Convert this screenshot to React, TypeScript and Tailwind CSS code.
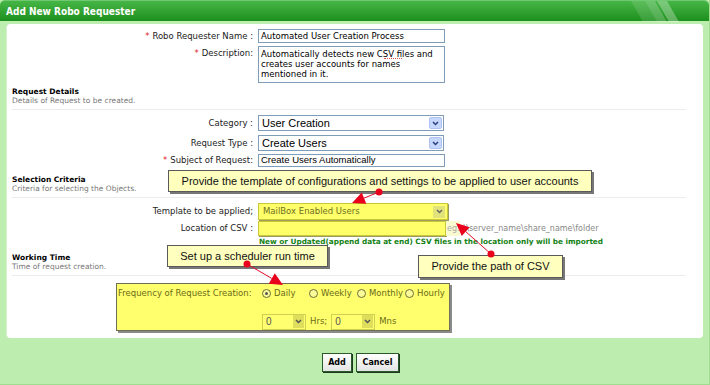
import React from "react";

const verdana = "font-['DejaVu_Sans',Verdana,sans-serif]";
const arial = "font-['Liberation_Sans',Arial,sans-serif]";

function Star() {
  return <span className="text-[#e0242b] mr-[3px]">*</span>;
}

function Chevron({ color = "#2b3f80" }: { color?: string }) {
  return (
    <svg width="7" height="5" viewBox="0 0 7 5">
      <path d="M1 1 L3.5 3.5 L6 1" stroke={color} strokeWidth="1.5" fill="none" />
    </svg>
  );
}

function Select({ value }: { value: string }) {
  return (
    <div className="w-[186px] h-[16px] border border-[#7f9db9] bg-white flex items-center">
      <span className={`${arial} text-[11px] text-black pl-[3px] flex-1 leading-none`}>{value}</span>
      <div className="w-[13px] h-[12px] mr-[1px] bg-[#c7d6fb] border border-[#aec3f3] rounded-[2px] flex items-center justify-center">
        <Chevron />
      </div>
    </div>
  );
}

function Section({ title, sub }: { title: string; sub: string }) {
  return (
    <div className="px-[5px]">
      <div className={`${verdana} text-[7.5px] font-bold leading-[9px] text-black`}>{title}</div>
      <div className={`${verdana} text-[7.5px] leading-[9px] text-[#777]`}>{sub}</div>
      <div className="h-px bg-[#ececec] mt-[4px] mr-[12px]" />
    </div>
  );
}

function Label({ children, top = false }: { children: React.ReactNode; top?: boolean }) {
  return (
    <div
      className={`w-[246px] mr-[5px] text-right ${verdana} text-[8.5px] text-[#222] leading-none ${top ? "pt-[3px]" : "self-center"}`}
    >
      {children}
    </div>
  );
}

function Callout({ className, text }: { className: string; text: string }) {
  return (
    <div
      className={`absolute bg-[#ffffbe] border border-[#5a5a5a] shadow-[2px_2px_0_#777] flex items-center justify-center ${arial} text-[11px] text-[#111] ${className}`}
    >
      {text}
    </div>
  );
}

function Radio({ label, checked = false, w }: { label: string; checked?: boolean; w: string }) {
  return (
    <div className={`flex items-center gap-[3px] ${w}`}>
      <div className="w-[9px] h-[9px] rounded-full border border-[#6d6d3a] bg-[#fbfb9a] flex items-center justify-center">
        {checked && <div className="w-[3px] h-[3px] rounded-full bg-[#555]" />}
      </div>
      <span>{label}</span>
    </div>
  );
}

function SmallSelect() {
  return (
    <div className="w-[44px] h-[16px] border border-[#cfcf50] bg-[#ffff70] flex items-center">
      <span className={`${arial} text-[10px] pl-[3px] flex-1 text-[#555]`}>0</span>
      <div className="w-[11px] h-[13px] mr-[1px] bg-[#dede5c] flex items-center justify-center">
        <Chevron color="#555" />
      </div>
    </div>
  );
}

function Arrow({ x1, y1, x2, y2 }: { x1: number; y1: number; x2: number; y2: number }) {
  const dx = x2 - x1;
  const dy = y2 - y1;
  const len = Math.sqrt(dx * dx + dy * dy);
  const ux = dx / len;
  const uy = dy / len;
  const hl = 13;
  const hw = 6;
  const bx = x2 - ux * hl;
  const by = y2 - uy * hl;
  const p = `${x2},${y2} ${bx - uy * hw},${by + ux * hw} ${bx + uy * hw},${by - ux * hw}`;
  return (
    <g>
      <line x1={x1} y1={y1} x2={bx} y2={by} stroke="#e0102a" strokeWidth="1" />
      <polygon points={p} fill="#e8001c" />
      <circle cx={x1} cy={y1} r="3.5" fill="#e8001c" />
    </g>
  );
}

export default function App() {
  return (
    <div className="relative w-[710px] h-[385px] overflow-hidden bg-[#bdeeb0] border-r border-b border-[#9fdc90]">
      {/* Title bar */}
      <div className="relative h-[21px] rounded-t-[5px] bg-gradient-to-b from-[#45b645] to-[#1c901c] flex items-center pl-[6px] border-t border-[#70c870]">
        <span className="font-['DejaVu_Sans_Condensed','DejaVu_Sans',sans-serif] text-[10px] font-bold text-white">Add New Robo Requester</span>
        <svg className="absolute right-[18px] top-0" width="60" height="21" viewBox="0 0 60 21">
          <polygon points="0,0 14,0 26,21 12,21" fill="#ffffff" opacity="0.12" />
          <polygon points="14,0 24,0 36,21 26,21" fill="#ffffff" opacity="0.22" />
          <polygon points="26,0 36,0 48,21 38,21" fill="#ffffff" opacity="0.3" />
        </svg>
      </div>

      {/* Panel */}
      <div className="mx-[6px] mt-[3px] h-[314px] bg-white rounded-[4px] border-l border-[#d6f2cd] pt-[5px]">
        <div className="flex">
          <Label><Star />Robo Requester Name :</Label>
          <div className={`w-[187px] h-[14px] border border-[#7f9db9] flex items-center pl-[2px] ${verdana} text-[8.5px] text-black`}>
            Automated User Creation Process
          </div>
        </div>
        <div className="flex mt-[3px]">
          <Label top><Star />Description:</Label>
          <div className={`relative w-[187px] h-[37px] border border-[#7f9db9] px-[2px] pt-[2px] ${verdana} text-[8.5px] leading-[10px] text-black`}>
            Automatically detects new CSV files and creates user accounts for names mentioned in it.
            {/* spell-check squiggle under "CSV" */}
            <div className="absolute left-[125px] top-[11px] w-[18px] border-b border-dotted border-[#e05050]" />
          </div>
        </div>

        <div className="mt-[4px]">
          <Section title="Request Details" sub="Details of Request to be created." />
        </div>

        <div className="flex mt-[5px]">
          <Label>Category :</Label>
          <Select value="User Creation" />
        </div>
        <div className="flex mt-[4px]">
          <Label>Request Type :</Label>
          <Select value="Create Users" />
        </div>
        <div className="flex mt-[3px]">
          <Label><Star />Subject of Request:</Label>
          <div className={`w-[187px] h-[13px] border border-[#7f9db9] flex items-center pl-[2px] ${arial} text-[9.5px] text-black`}>
            Create Users Automatically
          </div>
        </div>

        <div className="mt-[8px]">
          <Section title="Selection Criteria" sub="Criteria for selecting the Objects." />
        </div>

        <div className="flex mt-[5px]">
          <Label>Template to be applied;</Label>
          <div className="w-[190px] h-[17px] border border-[#c8c83a] bg-[#ffff6a] flex items-center shadow-[1px_1px_0_#9a9a60]">
            <span className={`${verdana} text-[8.5px] text-[#6e6e1e] pl-[4px] flex-1`}>MailBox Enabled Users</span>
            <div className="w-[12px] h-[12px] mr-[2px] bg-[#e2e27a] flex items-center justify-center">
              <Chevron color="#666" />
            </div>
          </div>
        </div>
        <div className="flex mt-[1px]">
          <Label>Location of CSV :</Label>
          <div className="flex items-center">
            <div className="w-[188px] h-[15px] border border-[#c8c83a] bg-[#ffff6a] shadow-[1px_1px_0_#9a9a60]" />
            <div className={`h-[15px] bg-[#fafad0] flex items-center pl-[1px] ${verdana} text-[8px] text-[#aaa]`}>eg.</div>
            <span className={`${verdana} text-[8px] text-[#888] pl-[4px]`}>\\server_name\share_name\folder</span>
          </div>
        </div>
        <div className={`ml-[252px] mt-[1px] ${verdana} text-[7.3px] font-bold text-[#148214] leading-[9px]`}>
          New or Updated(append data at end) CSV files in the location only will be imported
        </div>

        <div className="mt-[7px]">
          <Section title="Working Time" sub="Time of request creation." />
        </div>

        {/* Frequency highlight */}
        <div className={`ml-[109px] mt-[7px] w-[334px] h-[48px] bg-[#ffff6e] border border-[#6f6f55] shadow-[2px_2px_0_#8a8a8a] ${verdana} text-[8.5px] text-[#6b6b16] pt-[3px]`}>
          <div className="flex items-center">
            <span className="pl-[1px] w-[146px]">Frequency of Request Creation:</span>
            <div className="flex items-center">
              <Radio label="Daily" checked w="w-[47px]" />
              <Radio label="Weekly" w="w-[48px]" />
              <Radio label="Monthly" w="w-[48px]" />
              <Radio label="Hourly" w="w-[44px]" />
            </div>
          </div>
          <div className="flex items-center ml-[145px] mt-[14px] gap-[4px]">
            <SmallSelect />
            <span>Hrs;</span>
            <SmallSelect />
            <span>Mns</span>
          </div>
        </div>
      </div>

      {/* Buttons */}
      <div className="flex justify-center gap-[4px] mt-[15px] ml-[12px]">
        <button className={`w-[30px] h-[19px] bg-gradient-to-b from-white to-[#e4e4e4] border border-[#2a5a2a] shadow-[1px_1px_0_#1c3a1c] ${verdana} text-[8px] font-bold text-black`}>Add</button>
        <button className={`w-[43px] h-[19px] bg-gradient-to-b from-white to-[#e4e4e4] border border-[#2a5a2a] shadow-[1px_1px_0_#1c3a1c] ${verdana} text-[8px] font-bold text-black`}>Cancel</button>
      </div>

      {/* Annotations */}
      <Callout className="left-[168px] top-[170px] w-[424px] h-[22px]" text="Provide the template of configurations and settings to be applied to user accounts" />
      <Callout className="left-[167px] top-[245px] w-[161px] h-[22px]" text="Set up a scheduler run time" />
      <Callout className="left-[418px] top-[255px] w-[145px] h-[23px]" text="Provide the path of CSV" />
      <svg className="absolute left-0 top-0 pointer-events-none" width="710" height="385">
        <Arrow x1={379} y1={192} x2={352} y2={203} />
        <Arrow x1={491} y1={254} x2={456} y2={223} />
        <Arrow x1={247} y1={264} x2={283} y2={285} />
      </svg>
    </div>
  );
}
